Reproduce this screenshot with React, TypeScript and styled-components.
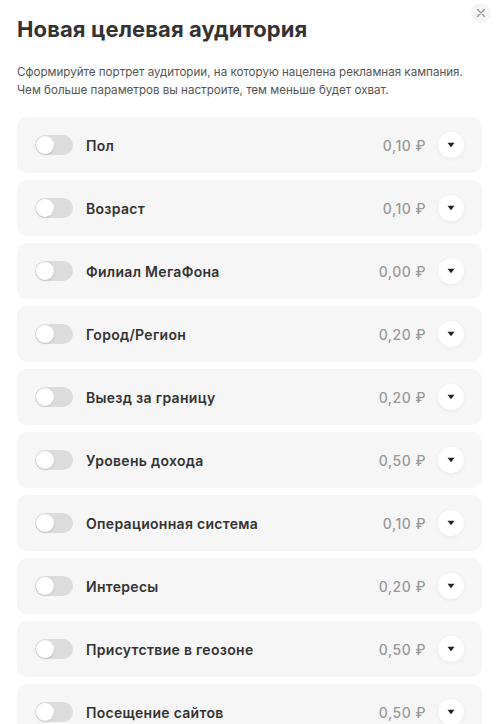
import React, { Component } from 'react';
import styled, { createGlobalStyle } from 'styled-components';

type RowType = { label: string, price: string };

const rows: RowType[] = [
  { label: 'Пол', price: '0,10' },
  { label: 'Возраст', price: '0,10' },
  { label: 'Филиал МегаФона', price: '0,00' },
  { label: 'Город/Регион', price: '0,20' },
  { label: 'Выезд за границу', price: '0,20' },
  { label: 'Уровень дохода', price: '0,50' },
  { label: 'Операционная система', price: '0,10' },
  { label: 'Интересы', price: '0,20' },
  { label: 'Присутствие в геозоне', price: '0,50' },
  { label: 'Посещение сайтов', price: '0,50' },
];

type StateType = {
  active: { [key: string]: boolean }
};

export default class App extends Component<{}, StateType> {
  state: StateType = {
    active: {}
  }

  toggle = (label: string) => {
    let active = { ...this.state.active };
    active[label] = !active[label];
    this.setState({ active });
  }

  renderRows = () => {
    return rows.map((row: RowType, i: number) => {
      let on = !!this.state.active[row.label];
      return (
        <Row key={i}>
          <Toggle on={on} onClick={() => this.toggle(row.label)}>
            <Knob on={on} />
          </Toggle>
          <Label>{row.label}</Label>
          <Price>{row.price} ₽</Price>
          <ExpandButton>
            <svg width="8" height="6" viewBox="0 0 8 6">
              <path d="M0.5 0.8 L7.5 0.8 L4 5.2 Z" fill="#222" />
            </svg>
          </ExpandButton>
        </Row>
      );
    });
  }

  render() {
    return (
      <Modal>
        <GlobalStyle />
        <CloseButton>
          <svg width="10" height="10" viewBox="0 0 10 10">
            <path d="M1.5 1.5 L8.5 8.5 M8.5 1.5 L1.5 8.5" stroke="#9a9a9a" strokeWidth="1.3" strokeLinecap="round" />
          </svg>
        </CloseButton>
        <Title>Новая целевая аудитория</Title>
        <Description>
          Сформируйте портрет аудитории, на которую нацелена рекламная кампания.
          <br />
          Чем больше параметров вы настроите, тем меньше будет охват.
        </Description>
        <RowList>
          {this.renderRows()}
        </RowList>
      </Modal>
    );
  }
}

const GlobalStyle = createGlobalStyle`
  body {
    margin: 0;
    background: #ffffff;
    font-family: Inter, "Noto Sans", sans-serif;
    color: #333333;
  }
`;

const Modal = styled.div`
  position: relative;
  width: 500px;
  height: 724px;
  overflow: hidden;
  box-sizing: border-box;
  padding: 15px 18px 0 17px;
`;

const CloseButton = styled.div`
  position: absolute;
  top: 3px;
  right: 9px;
  width: 20px;
  height: 20px;
  border-radius: 50%;
  background: #f5f5f5;
  display: flex;
  align-items: center;
  justify-content: center;
  cursor: pointer;
`;

const Title = styled.h1`
  margin: 0;
  font-size: 22px;
  line-height: 28px;
  font-weight: 700;
  color: #333333;
  letter-spacing: 0.1px;
`;

const Description = styled.p`
  margin: 20px 0 0;
  font-size: 11.6px;
  line-height: 18px;
  color: #555555;
`;

const RowList = styled.div`
  display: flex;
  flex-direction: column;
  gap: 7px;
  margin-top: 18px;
`;

const Row = styled.div`
  height: 56px;
  flex-shrink: 0;
  box-sizing: border-box;
  display: flex;
  align-items: center;
  padding: 0 18px;
  border-radius: 10px;
  background: #f6f6f6;
`;

const Toggle = styled.div`
  width: 38px;
  height: 20px;
  flex-shrink: 0;
  border-radius: 10px;
  background: ${(props: { on: boolean }) => props.on ? '#00b956' : '#dcdcdc'};
  display: flex;
  align-items: center;
  padding: 0 1px;
  box-sizing: border-box;
  cursor: pointer;
`;

const Knob = styled.div`
  width: 18px;
  height: 18px;
  border-radius: 50%;
  background: #ffffff;
  box-shadow: 0 1px 2px #00000022;
  transform: ${(props: { on: boolean }) => props.on ? 'translateX(18px)' : 'none'};
`;

const Label = styled.div`
  flex: 1;
  margin-left: 13px;
  font-size: 14px;
  font-weight: 600;
  color: #333333;
  letter-spacing: 0.3px;
  white-space: nowrap;
`;

const Price = styled.div`
  font-size: 14px;
  font-weight: 500;
  color: #999999;
  letter-spacing: 0.5px;
  margin-right: 12px;
`;

const ExpandButton = styled.div`
  width: 26px;
  height: 26px;
  flex-shrink: 0;
  border-radius: 50%;
  background: #ffffff;
  box-shadow: 0 1px 4px #0000000f;
  display: flex;
  align-items: center;
  justify-content: center;
  cursor: pointer;
`;
